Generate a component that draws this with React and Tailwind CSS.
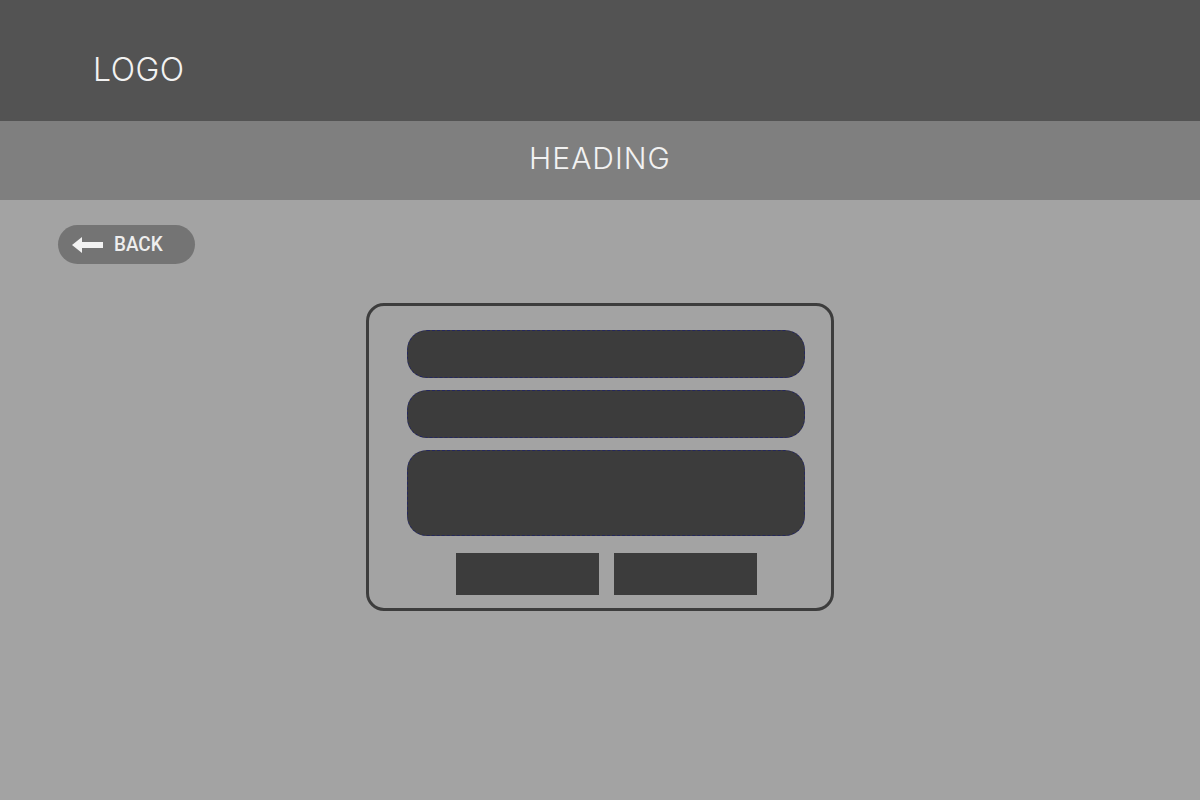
import React from "react";

const App = () => {
  return (
    <div className="w-[1200px] h-[800px] flex flex-col bg-[#a3a3a3] overflow-hidden">
      {/* Header */}
      <div className="h-[121px] bg-[#535353] flex items-center pl-[93px]">
        <span className="text-[#f2f2f2] text-[32px] font-light tracking-[0.5px] font-['Inter',sans-serif] pt-[19px]">
          LOGO
        </span>
      </div>

      {/* Heading band */}
      <div className="h-[79px] bg-[#7f7f7f] flex items-center justify-center pb-[5px]">
        <span className="text-[#f2f2f2] text-[30px] font-light tracking-[1px] font-['Inter',sans-serif]">
          HEADING
        </span>
      </div>

      {/* Body */}
      <div className="flex-1 flex flex-col">
        <div className="pl-[58px] pt-[25px]">
          <button className="w-[137px] h-[39px] rounded-full bg-[#747474] flex items-center pl-[14px] gap-[10px] text-[#eeeeee]">
            <svg width="32" height="18" viewBox="0 0 32 18">
              <path d="M0 9 L10 1 L10 6 L31 6 L31 12 L10 12 L10 17 Z" fill="#f2f2f2" />
            </svg>
            <span className="text-[21px] font-medium font-['Roboto',sans-serif] scale-x-[0.9] origin-left">
              BACK
            </span>
          </button>
        </div>

        <div className="flex justify-center pt-[39px]">
          <div className="w-[468px] h-[308px] border-[3px] border-[#3d3d3d] rounded-[18px] pl-[38px] pr-[26px] pt-[24px] flex flex-col gap-[12px]">
            <div className="h-[48px] rounded-[20px] bg-[#3c3c3c] border border-dashed border-[#24275e]" />
            <div className="h-[48px] rounded-[20px] bg-[#3c3c3c] border border-dashed border-[#24275e]" />
            <div className="h-[86px] rounded-[20px] bg-[#3c3c3c] border border-dashed border-[#24275e]" />
            <div className="flex justify-center gap-[15px] pt-[5px]">
              <div className="w-[143px] h-[42px] bg-[#3c3c3c]" />
              <div className="w-[143px] h-[42px] bg-[#3c3c3c]" />
            </div>
          </div>
        </div>
      </div>
    </div>
  );
};

export default App;
